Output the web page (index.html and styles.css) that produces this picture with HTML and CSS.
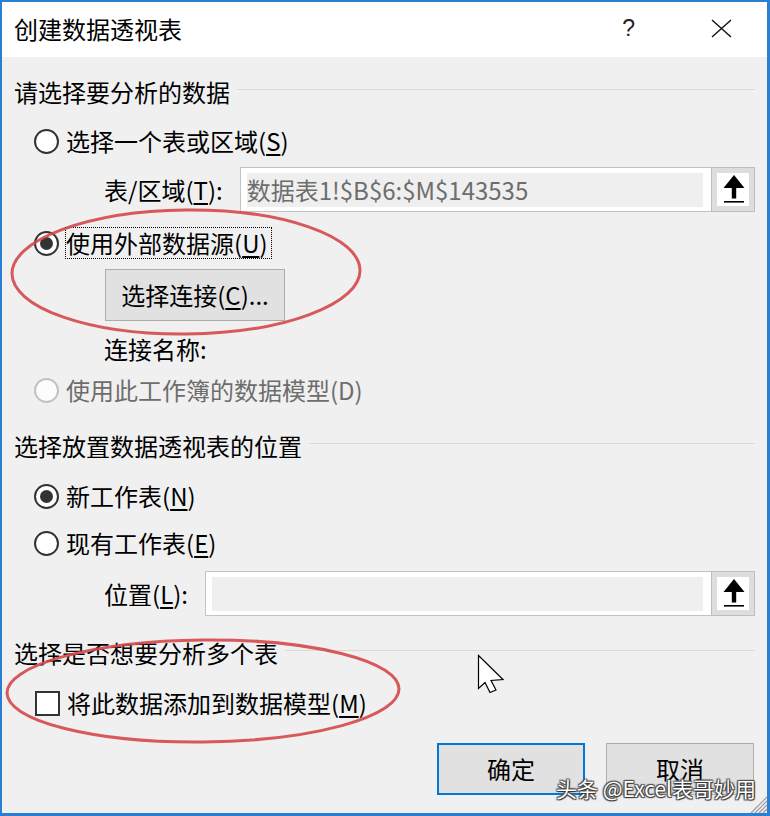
FILE: index.html
```html
<!DOCTYPE html>
<html lang="zh-CN">
<head>
<meta charset="utf-8">
<title>创建数据透视表</title>
<link rel="stylesheet" href="styles.css">
</head>
<body>
<div class="page">
  <div class="window">
    <div class="titlebar">
      <span class="title">创建数据透视表</span>
      <span class="help">?</span>
      <span class="close"><svg width="21" height="19" viewBox="0 0 21 19"><path d="M1 1 L20 18 M20 1 L1 18" stroke="#111" stroke-width="1.4" fill="none"/></svg></span>
    </div>
    <div class="content">
      <div class="section-head head-data"><span>请选择要分析的数据</span></div>

      <div class="radio-row row-range">
        <span class="radio"></span>
        <span class="label">选择一个表或区域(<u>S</u>)</span>
      </div>

      <div class="field-row row-table">
        <span class="field-label">表/区域(<u>T</u>):</span>
        <div class="input"><div class="input-inner">数据表1!$B$6:$M$143535</div></div>
        <div class="ref-btn"><span class="ref-icon"><svg width="32" height="33" viewBox="0 0 32 33"><path d="M17 2 L27.5 15 L19.2 15 L19.2 25.5 L14.8 25.5 L14.8 15 L6.5 15 Z" fill="#000"/><rect x="7" y="28" width="20" height="1.6" fill="#000"/></svg></span></div>
      </div>

      <div class="radio-row row-external">
        <span class="radio checked"></span>
        <span class="label focused">使用外部数据源(<u>U</u>)</span>
      </div>

      <div class="conn-btn">选择连接(<u>C</u>)...</div>

      <div class="conn-name">连接名称:</div>

      <div class="radio-row row-model disabled">
        <span class="radio"></span>
        <span class="label">使用此工作簿的数据模型(D)</span>
      </div>

      <div class="section-head head-place"><span>选择放置数据透视表的位置</span></div>

      <div class="radio-row row-new">
        <span class="radio checked"></span>
        <span class="label">新工作表(<u>N</u>)</span>
      </div>

      <div class="radio-row row-existing">
        <span class="radio"></span>
        <span class="label">现有工作表(<u>E</u>)</span>
      </div>

      <div class="field-row row-location">
        <span class="field-label">位置(<u>L</u>):</span>
        <div class="input"><div class="input-inner"></div></div>
        <div class="ref-btn"><span class="ref-icon"><svg width="32" height="33" viewBox="0 0 32 33"><path d="M17 2 L27.5 15 L19.2 15 L19.2 25.5 L14.8 25.5 L14.8 15 L6.5 15 Z" fill="#000"/><rect x="7" y="28" width="20" height="1.6" fill="#000"/></svg></span></div>
      </div>

      <div class="section-head head-multi"><span>选择是否想要分析多个表</span></div>

      <div class="check-row">
        <span class="checkbox"></span>
        <span class="label">将此数据添加到数据模型(<u>M</u>)</span>
      </div>

      <div class="buttons">
        <div class="btn btn-ok">确定</div>
        <div class="btn btn-cancel">取消</div>
      </div>
    </div>
  </div>

  <svg class="overlay" width="770" height="816" viewBox="0 0 770 816">
    <ellipse cx="186" cy="272" rx="174" ry="62" fill="none" stroke="#d5484a" stroke-width="3" opacity="0.9" transform="rotate(-0.6 186 272)"/>
    <ellipse cx="203" cy="691" rx="196" ry="51" fill="none" stroke="#d5484a" stroke-width="3" opacity="0.9" transform="rotate(-0.6 203 691)"/>
    <polygon points="478.5,655.5 478.5,688.5 485,682.5 490,692.5 496,690 491,680.5 503,679.5" fill="#fff" stroke="#000" stroke-width="1.2" stroke-linejoin="miter"/>
    <g stroke="#9a9a9a" stroke-width="1.2">
      <line x1="767" y1="797" x2="751" y2="813"/>
      <line x1="767" y1="801" x2="755" y2="813"/>
      <line x1="767" y1="805" x2="759" y2="813"/>
      <line x1="767" y1="809" x2="763" y2="813"/>
    </g>
  </svg>
  <span class="watermark">头条 @Excel表哥妙用</span>
</div>
</body>
</html>
```

FILE: styles.css
```css
* {
  box-sizing: border-box;
}

html, body {
  margin: 0;
  padding: 0;
  width: 770px;
  height: 816px;
  overflow: hidden;
  background: #f0f0f0;
}

body {
  font-family: "Noto Sans CJK SC", "Noto Sans", sans-serif;
  font-size: 24px;
  color: #000;
}

.page {
  position: relative;
  width: 770px;
  height: 816px;
}

.window {
  width: 770px;
  height: 816px;
  border-style: solid;
  border-color: #2b7fd3;
  border-width: 2px 3px 3px 2px;
  background: #f0f0f0;
  display: flex;
  flex-direction: column;
}

.titlebar {
  height: 55px;
  background: #fff;
  display: flex;
  align-items: center;
  padding-left: 12px;
  flex-shrink: 0;
}

.title {
  line-height: 32px;
  margin-top: -2px;
}

.help {
  margin-left: auto;
  font-family: "Liberation Sans", "DejaVu Sans", sans-serif;
  font-size: 23px;
  color: #222;
  margin-top: -3px;
}

.close {
  display: flex;
  margin-left: 76px;
  margin-right: 35px;
  margin-top: -3px;
}

.content {
  flex: 1;
  display: flex;
  flex-direction: column;
  padding: 0 12px 0 12px;
}

u {
  text-decoration-thickness: 1.5px;
  text-underline-offset: 3px;
}

/* section headings with rule */
.section-head {
  display: flex;
  height: 32px;
  line-height: 32px;
}

.section-head::after {
  content: "";
  flex: 1;
  height: 1px;
  background: #dadada;
  margin-left: 7px;
  margin-top: 13px;
}

.head-data { margin-top: 19px; }
.head-place { margin-top: 24px; }
.head-multi { margin-top: 21px; }

/* radios */
.radio-row,
.check-row {
  display: flex;
  align-items: center;
  height: 32px;
}

.radio {
  width: 25px;
  height: 25px;
  border: 2px solid #333;
  border-radius: 50%;
  background: #fff;
  margin-left: 20px;
  display: flex;
  align-items: center;
  justify-content: center;
  flex-shrink: 0;
}

.radio.checked::after {
  content: "";
  width: 13px;
  height: 13px;
  border-radius: 50%;
  background: #333;
}

.label {
  margin-left: 6px;
  padding: 0 3px 0 0;
  line-height: 30px;
  border: 1px dotted transparent;
}

.label.focused {
  border-color: #000;
}

.disabled .radio {
  border-color: #c2c2c2;
  background: #fcfcfc;
}

.disabled .label {
  color: #6d6d6d;
}

.row-range { margin-top: 17px; }
.row-external { margin-top: 15px; }
.row-model { margin-top: 9px; }
.row-new { margin-top: 18px; }
.row-existing { margin-top: 15px; }

.checkbox {
  width: 25px;
  height: 25px;
  border: 2px solid #333;
  background: #fff;
  margin-left: 21px;
  flex-shrink: 0;
}

.check-row { margin-top: 18px; }

/* field rows */
.field-row {
  display: flex;
  align-items: center;
  margin-left: 90px;
  height: 45px;
}

.row-table { margin-top: 10px; }
.row-location { margin-top: 12px; }

.field-label {
  line-height: 32px;
  margin-right: 17px;
  white-space: nowrap;
}

.input {
  flex: 1;
  height: 45px;
  border: 1px solid #c3c3c3;
  border-right: none;
  background: #fff;
  padding: 5px 8px 4px 6px;
}

.input-inner {
  height: 100%;
  background: #efefef;
  color: #6d6d6d;
  line-height: 34px;
  padding-left: 0;
  white-space: nowrap;
  overflow: hidden;
}

.ref-btn {
  width: 44px;
  height: 45px;
  border: 1px solid #bdbdbd;
  background: #dddddd;
  display: flex;
  align-items: center;
  justify-content: center;
  flex-shrink: 0;
}

.ref-icon {
  width: 32px;
  height: 33px;
  background: #fff;
  display: flex;
}

/* connection */
.conn-btn {
  margin-top: 10px;
  margin-left: 91px;
  width: 180px;
  height: 52px;
  border: 1px solid #adadad;
  background: #e1e1e1;
  display: flex;
  align-items: center;
  justify-content: center;
  line-height: 32px;
}

.conn-name {
  margin-top: 12px;
  margin-left: 90px;
  line-height: 32px;
  height: 32px;
}

/* bottom buttons */
.buttons {
  display: flex;
  justify-content: flex-end;
  gap: 21px;
  margin-top: 24px;
  padding-right: 1px;
}

.btn {
  width: 148px;
  height: 52px;
  background: #e1e1e1;
  border: 1px solid #adadad;
  display: flex;
  align-items: center;
  justify-content: center;
  line-height: 32px;
}

.btn-ok {
  border: 2px solid #0078d7;
}

/* overlays */
.overlay {
  position: absolute;
  left: 0;
  top: 0;
  pointer-events: none;
}

.watermark {
  position: absolute;
  left: 556px;
  top: 775px;
  font-size: 21px;
  line-height: 26px;
  color: #fff;
  white-space: nowrap;
  text-shadow: 0 0 1px #222, 1px 1px 1px #333, -1px -1px 1px #555, 1px -1px 1px #555, -1px 1px 1px #555;
}
```
